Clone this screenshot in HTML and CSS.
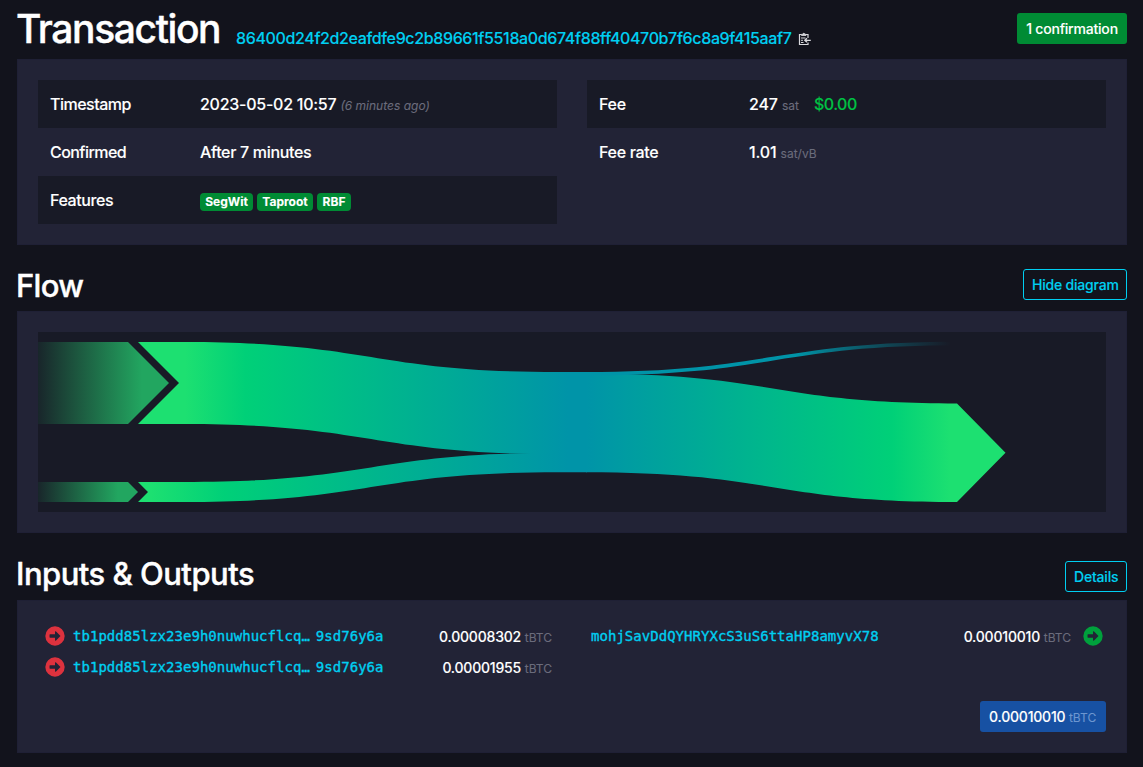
FILE: index.html
```html
<!DOCTYPE html>
<html lang="en">
<head>
<meta charset="utf-8">
<title>Transaction</title>
<link rel="stylesheet" href="styles.css">
</head>
<body>
<svg class="defs" width="0" height="0" aria-hidden="true">
  <symbol id="arrow-circle" viewBox="0 0 512 512">
    <path fill-rule="evenodd" d="M256 8a248 248 0 1 1 0 496a248 248 0 1 1 0-496zM116 224v64c0 6.600 5.400 12 12 12h128v67.300c0 10.700 12.900 16.100 20.500 8.500l114-111.300c4.700-4.700 4.700-12.300 0-17l-114-111.300c-7.600-7.600-20.500-2.200-20.500 8.500V212H128c-6.600 0-12 5.400-12 12z"/>
  </symbol>
</svg>
<main class="page">
  <header class="title-row">
    <h1 class="title">Transaction</h1>
    <a class="txid">86400d24f2d2eafdfe9c2b89661f5518a0d674f88ff40470b7f6c8a9f415aaf7</a>
    <svg class="clipboard" viewBox="0 0 13 14" fill="none" stroke="#d8d8dc">
      <path d="M3.500 2.500H1.500V12.500H10V10.500M8 2.500H10V6" stroke-width="1.200"/>
      <path d="M3.500 3.500V2.300H4.800a1 1 0 0 1 2 0H8V3.500Z" fill="#d8d8dc" stroke-width=".8"/>
      <path d="M3 6H7.500M3 8.300H5M3 10.500H5.500" stroke-width="1"/>
      <path d="M12.800 8.300H7M9 6.300L6.800 8.300L9 10.300" stroke-width="1.300"/>
    </svg>
    <button class="btn btn-success">1 confirmation</button>
  </header>

  <section class="box summary">
    <div class="table">
      <div class="row"><span class="label l-time">Timestamp</span><span class="value"><span class="v-date">2023-05-02 10:57</span> <i class="ago">(6 minutes ago)</i></span></div>
      <div class="row"><span class="label l-conf">Confirmed</span><span class="value v-after">After 7 minutes</span></div>
      <div class="row"><span class="label l-feat">Features</span><span class="badges"><b class="badge w-seg">SegWit</b><b class="badge w-tap">Taproot</b><b class="badge w-rbf">RBF</b></span></div>
    </div>
    <div class="table">
      <div class="row"><span class="label l-fee">Fee</span><span class="value"><span class="v-fee">247</span> <span class="unit">sat</span><span class="fiat">$0.00</span></span></div>
      <div class="row"><span class="label l-rate">Fee rate</span><span class="value"><span class="v-rate">1.01</span> <span class="unit">sat/vB</span></span></div>
    </div>
  </section>

  <header class="section-row flow-row">
    <h2 class="subtitle s-flow">Flow</h2>
    <button class="btn btn-outline b-hide">Hide diagram</button>
  </header>

  <section class="box flow">
    <svg class="diagram" viewBox="0 0 1068 180">
      <defs>
        <linearGradient id="in1" gradientUnits="userSpaceOnUse" x1="100" y1="0" x2="530" y2="0">
          <stop offset="0" stop-color="#1de071"/><stop offset=".11" stop-color="#1de071"/><stop offset=".25" stop-color="#00d078"/><stop offset="1" stop-color="#0094a8"/>
        </linearGradient>
        <linearGradient id="in2" gradientUnits="userSpaceOnUse" x1="100" y1="0" x2="530" y2="0">
          <stop offset="0" stop-color="#1de071"/><stop offset=".03" stop-color="#1de071"/><stop offset=".2" stop-color="#00d078"/><stop offset="1" stop-color="#0094a8"/>
        </linearGradient>
        <linearGradient id="out" gradientUnits="userSpaceOnUse" x1="548" y1="0" x2="967" y2="0">
          <stop offset="0" stop-color="#0094a8"/><stop offset=".73" stop-color="#00d078"/><stop offset=".87" stop-color="#1de071"/>
        </linearGradient>
        <linearGradient id="fee" gradientUnits="userSpaceOnUse" x1="548" y1="0" x2="967" y2="0">
          <stop offset="0" stop-color="#0094a8"/><stop offset=".5" stop-color="#0094a8"/><stop offset=".68" stop-color="#0094a8" stop-opacity=".45"/><stop offset=".87" stop-color="#0094a8" stop-opacity="0"/>
        </linearGradient>
        <linearGradient id="con1" gradientUnits="userSpaceOnUse" x1="0" y1="0" x2="104" y2="0">
          <stop offset="0" stop-color="#22aa60" stop-opacity=".08"/><stop offset="1" stop-color="#22a660"/>
        </linearGradient>
        <linearGradient id="con2" gradientUnits="userSpaceOnUse" x1="0" y1="0" x2="80" y2="0">
          <stop offset="0" stop-color="#22aa60" stop-opacity=".08"/><stop offset="1" stop-color="#22a660"/>
        </linearGradient>
      </defs>
      <path fill="url(#con1)" d="M0 10H90L131 51L90 92H0Z"/>
      <path fill="url(#con2)" d="M0 150H90L100 160L90 170H0Z"/>
      <path fill="url(#in1)" d="M100 10H146C333 10 333 40 520 40H549V122H520C333 122 333 92 146 92H100L141 51Z"/>
      <path fill="url(#in2)" d="M100 150H146C333 150 333 120.700 520 120.700H549V140.300H520C333 140.300 333 170 146 170H100L110 160Z"/>
      <path fill="url(#out)" d="M548 41.500C735 41.500 735 71.500 919 71.500L967.500 120.700L919 170C735 170 735 140.300 548 140.300Z"/>
      <path fill="none" stroke="url(#fee)" stroke-width="3.600" d="M548 41.800C735 41.800 735 11.500 922 11.500H967"/>
    </svg>
  </section>

  <header class="section-row io-row">
    <h2 class="subtitle s-io">Inputs &amp; Outputs</h2>
    <button class="btn btn-outline b-details">Details</button>
  </header>

  <section class="box io">
    <div class="io-cols">
      <div class="io-list">
        <div class="io-item">
          <svg class="icon red"><use href="#arrow-circle"/></svg>
          <a class="addr">tb1pdd85lzx23e9h0nuwhucflcq…<span class="tail">9sd76y6a</span></a>
          <span class="amount"><span class="num">0.00008302</span> <span class="unit">tBTC</span></span>
        </div>
        <div class="io-item">
          <svg class="icon red"><use href="#arrow-circle"/></svg>
          <a class="addr">tb1pdd85lzx23e9h0nuwhucflcq…<span class="tail">9sd76y6a</span></a>
          <span class="amount"><span class="num">0.00001955</span> <span class="unit">tBTC</span></span>
        </div>
      </div>
      <div class="io-list">
        <div class="io-item out">
          <a class="addr">mohjSavDdQYHRYXcS3uS6ttaHP8amyvX78</a>
          <span class="amount"><span class="num">0.00010010</span> <span class="unit">tBTC</span></span>
          <svg class="icon green"><use href="#arrow-circle"/></svg>
        </div>
      </div>
    </div>
    <div class="total-row">
      <button class="btn total"><span class="num">0.00010010</span> <span class="unit">tBTC</span></button>
    </div>
  </section>
</main>
</body>
</html>
```
FILE: styles.css
```css
* { box-sizing: border-box; }
body {
  margin: 0;
  background: #12131c;
  color: #fff;
  font: 450 16px/24px Inter, "Liberation Sans", sans-serif;
  -webkit-text-stroke: .1px;
  white-space: nowrap;
  overflow: hidden;
}
h1, h2 { margin: 0; font-weight: 500; }
.defs { position: absolute; }
.page { height: 767px; padding: 0 16px 0 17px; }
.title-row { display: flex; height: 59px; align-items: flex-start; }
.title { width: 219px; font-size: 39px; line-height: 48px; padding-top: 5px; margin-left: -1px; margin-right: 1px; letter-spacing: -1.4px; -webkit-text-stroke: .4px; }
.txid { width: 556px; padding-top: 26px; color: #00cff1; letter-spacing: -.365px; }
.clipboard { width: 13px; height: 14px; margin: 32px 0 0 6px; }
.btn {
  display: block;
  height: 31px;
  padding: 0 8px;
  border: 1px solid transparent;
  border-radius: 3px;
  font: 500 14px/29px Inter, "Liberation Sans", sans-serif;
  letter-spacing: -.2px;
  color: #fff;
  white-space: nowrap;
}
.btn-success { width: 110px; margin: 13px 0 0 auto; background: #008b34; }
.btn-outline { border-color: #00cff1; background: none; color: #00cff1; }
.b-hide { width: 104px; }
.b-details { width: 62px; }
.box { padding: 20px; background: #222336; border: 1px solid #1f2035; }
.summary { display: grid; grid-template-columns: 1fr 1fr; gap: 30px; height: 186px; }
.row { display: flex; height: 48px; padding: 0 12px; align-items: center; }
.row:nth-child(odd) { background: #181a26; }
.label { width: 150px; letter-spacing: -.3px; }
.l-time { letter-spacing: -.5px; }
.l-conf { letter-spacing: -.55px; }
.l-feat { letter-spacing: -.4px; }
.value { letter-spacing: -.25px; padding-top: 1px; }
.v-after { padding-top: 0; letter-spacing: -.32px; }
.ago, .unit { font-size: 12px; font-weight: 400; color: #6b6c7c; letter-spacing: 0; }
.v-fee, .v-rate { letter-spacing: -.12px; }
.badges { display: flex; gap: 4px; padding-top: 3px; }
.badge { height: 18px; border-radius: 4px; background: #008b34; font-size: 12px; line-height: 18px; text-align: center; }
.w-seg { width: 53px; }
.w-tap { width: 56px; }
.w-rbf { width: 34px; }
.fiat { margin-left: 15px; color: #00c244; letter-spacing: -.5px; }
.section-row { display: flex; justify-content: space-between; }
.flow-row { height: 66px; padding-top: 24px; }
.io-row { height: 67px; padding-top: 28px; }
.subtitle { font-size: 31px; line-height: 34px; letter-spacing: -.52px; margin-left: -1px; -webkit-text-stroke: .4px; }
.s-flow { letter-spacing: -.7px; }
.io-row .subtitle { margin-top: -4px; }
.flow { height: 222px; }
.diagram { display: block; width: 1068px; height: 180px; background: #181a26; }
.io { height: 153px; display: flex; flex-direction: column; justify-content: space-between; }
.io-cols { display: grid; grid-template-columns: 519px 519px; gap: 30px; }
.io-item { display: flex; height: 31px; align-items: center; font-size: 14px; padding: 0 5px 0 7px; }
.io-item.out { padding: 0 3px 0 4px; }
.icon { width: 20px; height: 20px; margin-bottom: 1px; }
.red { margin-right: 8px; fill: #dd323e; }
.green { margin-left: 12px; fill: #00a03c; }
.addr { font: 14px/21px "DejaVu Sans Mono", monospace; -webkit-text-stroke: .35px; letter-spacing: .03px; color: #00cff1; }
.tail { margin-left: 6px; }
.num { font-weight: 500; letter-spacing: -.2px; }
.amount { margin-left: auto; padding-top: 1px; }
.total-row { display: flex; justify-content: flex-end; }
.total { width: 126px; background: #1751a3; text-align: left; }
.total .unit { color: #6c96d0; }
```
